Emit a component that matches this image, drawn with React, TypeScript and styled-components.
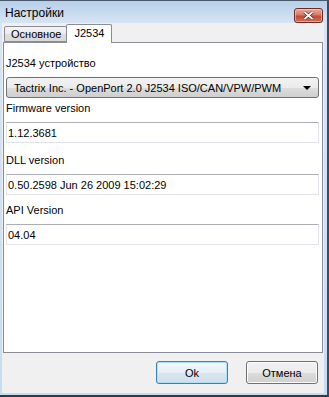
import React from "react";
import styled, { createGlobalStyle } from "styled-components";

const Global = createGlobalStyle`
  html, body {
    margin: 0;
    padding: 0;
    background: #ffffff;
  }
  body {
    font-family: "Liberation Sans", Arial, sans-serif;
    font-size: 11px;
    color: #000;
  }
`;

// окно целиком
const Window = styled.div`
  width: 329px;
  height: 397px;
  box-sizing: border-box;
  border-top: 1px solid #4a5a6c;
  border-right: 2px solid #3f4c5a;
  border-bottom: 2px solid #2f3a46;
  background: linear-gradient(to bottom, #b7cfe9 0px, #d6e5f4 22px, #c8dcf0 100%);
  padding: 0 3px 2px 2px;
  display: flex;
  flex-direction: column;
`;

const TitleBar = styled.div`
  height: 22px;
  display: flex;
  align-items: center;
  justify-content: space-between;
  padding: 0 1px 0 3px;
`;

const Title = styled.div`
  font-size: 12px;
  color: #000;
  padding-top: 1px;
`;

const CloseButton = styled.div`
  width: 27px;
  height: 13px;
  margin-top: 7px;
  border: 1px solid #6d2b22;
  border-radius: 3px;
  background: linear-gradient(to bottom, #e9a99c 0%, #d77a68 45%, #c04c36 55%, #d0705a 100%);
  display: flex;
  align-items: center;
  justify-content: center;
  box-shadow: inset 0 0 0 1px rgba(255, 220, 210, 0.5);
`;

const Client = styled.div`
  flex: 1;
  background: #f0f0f0;
  display: flex;
  flex-direction: column;
  padding: 1px 1px 0 1px;
`;

const TabStrip = styled.div`
  height: 18px;
  display: flex;
  align-items: flex-end;
  padding-left: 1px;
  position: relative;
  z-index: 1;
`;

const Tab = styled.div<{ active?: boolean }>`
  box-sizing: border-box;
  height: ${({ active }) => (active ? "19px" : "16px")};
  margin-bottom: ${({ active }) => (active ? "-1px" : "0")};
  padding: ${({ active }) => (active ? "2px 7px 0 7px" : "1px 5px 0 6px")};
  border: 1px solid #898c95;
  border-bottom: ${({ active }) => (active ? "none" : "1px solid #898c95")};
  margin-left: ${({ active }) => (active ? "-1px" : "0")};
  border-radius: 2px 2px 0 0;
  background: ${({ active }) =>
    active
      ? "#ffffff"
      : "linear-gradient(to bottom, #f4f4f4 0%, #ebebeb 50%, #dedede 50%, #d8d8d8 100%)"};
`;

const Panel = styled.div`
  height: 311px;
  box-sizing: border-box;
  border: 1px solid #898c95;
  background: #ffffff;
  padding: 0 3px 0 2px;
  display: flex;
  flex-direction: column;
`;

const Group = styled.div<{ gap: number }>`
  margin-top: ${({ gap }) => gap}px;
  display: flex;
  flex-direction: column;
`;

const Label = styled.div`
  height: 13px;
  line-height: 13px;
  margin-bottom: 7px;
`;

const Combo = styled.div`
  height: 21px;
  box-sizing: border-box;
  border: 1px solid #707070;
  border-radius: 3px;
  background: linear-gradient(to bottom, #f2f2f2 0%, #ebebeb 50%, #dddddd 50%, #cfcfcf 100%);
  display: flex;
  align-items: center;
  justify-content: space-between;
  padding: 0 7px 0 7px;
`;

const Arrow = styled.div`
  width: 0;
  height: 0;
  border-left: 4px solid transparent;
  border-right: 4px solid transparent;
  border-top: 4px solid #000;
`;

const TextBox = styled.div`
  height: 21px;
  box-sizing: border-box;
  border: 1px solid #e2e3ea;
  border-top-color: #abadb3;
  background: #fff;
  display: flex;
  align-items: center;
  padding-left: 1px;
`;

const ButtonRow = styled.div`
  display: flex;
  justify-content: flex-end;
  gap: 18px;
  padding: 8px 5px 0 0;
`;

const Button = styled.div<{ primary?: boolean }>`
  width: 72px;
  height: 23px;
  box-sizing: border-box;
  border: 1px solid ${({ primary }) => (primary ? "#3c7fb1" : "#707070")};
  border-radius: 3px;
  background: ${({ primary }) =>
    primary
      ? "linear-gradient(to bottom, #f3f8fb 0%, #e6eff6 50%, #d8e6f0 50%, #cfdfea 100%)"
      : "linear-gradient(to bottom, #f2f2f2 0%, #ebebeb 50%, #dddddd 50%, #cfcfcf 100%)"};
  box-shadow: ${({ primary }) =>
    primary ? "inset 0 0 0 1px #aee2f8" : "inset 0 0 0 1px #fcfcfc"};
  display: flex;
  align-items: center;
  justify-content: center;
`;

const fields = [
  { label: "Firmware version", value: "1.12.3681", gap: 4 },
  { label: "DLL version", value: "0.50.2598 Jun 26 2009 15:02:29", gap: 11 },
  { label: "API Version", value: "04.04", gap: 9 },
];

export default function App() {
  return (
    <>
      <Global />
      <Window>
        <TitleBar>
          <Title>Настройки</Title>
          <CloseButton>
            <svg width="11" height="9" viewBox="0 0 11 9">
              <path d="M1.5 1 L9.5 8 M9.5 1 L1.5 8" stroke="#5a1a10" strokeWidth="3" />
              <path d="M1.5 1 L9.5 8 M9.5 1 L1.5 8" stroke="#ffffff" strokeWidth="1.8" />
            </svg>
          </CloseButton>
        </TitleBar>
        <Client>
          <TabStrip>
            <Tab>Основное</Tab>
            <Tab active>J2534</Tab>
          </TabStrip>
          <Panel>
            <Group gap={14}>
              <Label>J2534 устройство</Label>
              <Combo>
                <span>Tactrix Inc. - OpenPort 2.0 J2534 ISO/CAN/VPW/PWM</span>
                <Arrow />
              </Combo>
            </Group>
            {fields.map((f) => (
              <Group key={f.label} gap={f.gap}>
                <Label>{f.label}</Label>
                <TextBox>{f.value}</TextBox>
              </Group>
            ))}
          </Panel>
          <ButtonRow>
            <Button primary>Ok</Button>
            <Button>Отмена</Button>
          </ButtonRow>
        </Client>
      </Window>
    </>
  );
}
